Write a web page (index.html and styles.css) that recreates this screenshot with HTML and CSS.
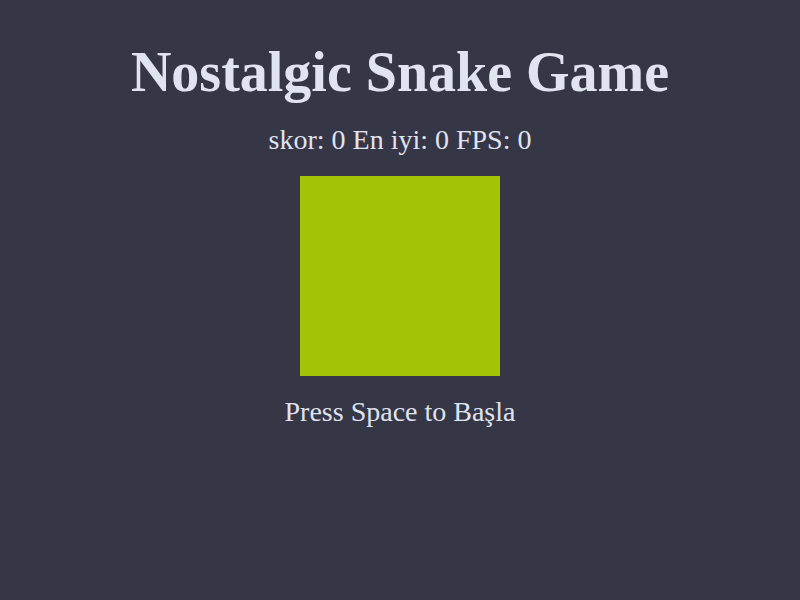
FILE: index.html
```html
<!DOCTYPE html>
<html lang="tr">
<head>
<meta charset="utf-8">
<title>Nostalgic Snake Game</title>
<link rel="stylesheet" href="styles.css">
</head>
<body>
<main class="game">
  <h1 class="title">Nostalgic Snake Game</h1>
  <div class="scores">skor: 0 En iyi: 0 FPS: 0</div>
  <div class="board"></div>
  <div class="hint">Press Space to Başla</div>
</main>
</body>
</html>
```
FILE: styles.css
```css
html, body {
  margin: 0;
  padding: 0;
  background: #353646;
  height: 100%;
}
body {
  font-family: "Liberation Serif", "Times New Roman", serif;
  color: #e0e3f0;
}
.game {
  display: flex;
  flex-direction: column;
  align-items: center;
  padding-top: 40px;
}
.title {
  margin: 0;
  font-size: 56px;
  font-weight: bold;
  line-height: 64px;
}
.scores {
  margin-top: 20px;
  font-size: 28px;
  line-height: 32px;
}
.board {
  margin-top: 20px;
  width: 200px;
  height: 200px;
  background: #a2c404;
}
.hint {
  margin-top: 20px;
  font-size: 28px;
  line-height: 32px;
}
```
